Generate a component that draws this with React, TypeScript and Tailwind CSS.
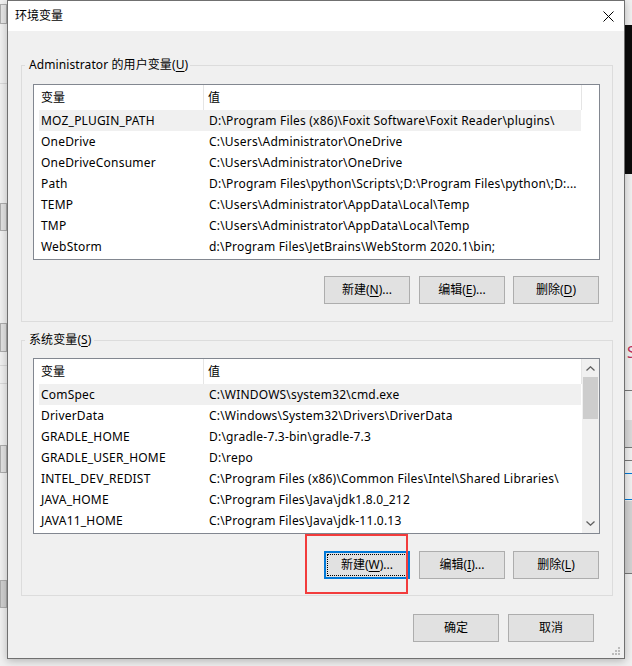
import React from "react";

type Row = [string, string];

const userVars: Row[] = [
  ["MOZ_PLUGIN_PATH", "D:\\Program Files (x86)\\Foxit Software\\Foxit Reader\\plugins\\"],
  ["OneDrive", "C:\\Users\\Administrator\\OneDrive"],
  ["OneDriveConsumer", "C:\\Users\\Administrator\\OneDrive"],
  ["Path", "D:\\Program Files\\python\\Scripts\\;D:\\Program Files\\python\\;D:..."],
  ["TEMP", "C:\\Users\\Administrator\\AppData\\Local\\Temp"],
  ["TMP", "C:\\Users\\Administrator\\AppData\\Local\\Temp"],
  ["WebStorm", "d:\\Program Files\\JetBrains\\WebStorm 2020.1\\bin;"],
];

const sysVars: Row[] = [
  ["ComSpec", "C:\\WINDOWS\\system32\\cmd.exe"],
  ["DriverData", "C:\\Windows\\System32\\Drivers\\DriverData"],
  ["GRADLE_HOME", "D:\\gradle-7.3-bin\\gradle-7.3"],
  ["GRADLE_USER_HOME", "D:\\repo"],
  ["INTEL_DEV_REDIST", "C:\\Program Files (x86)\\Common Files\\Intel\\Shared Libraries\\"],
  ["JAVA_HOME", "C:\\Program Files\\Java\\jdk1.8.0_212"],
  ["JAVA11_HOME", "C:\\Program Files\\Java\\jdk-11.0.13"],
];

function Mn({ pre, k, post }: { pre: string; k: string; post: string }) {
  return (
    <span className="whitespace-nowrap">
      {pre}
      <span className="underline underline-offset-2">{k}</span>
      {post}
    </span>
  );
}

function Btn({ children, focused, className = "" }: { children: React.ReactNode; focused?: boolean; className?: string }) {
  return (
    <div
      className={
        "relative w-[86px] h-[28px] flex items-center justify-center bg-[#e1e1e1] leading-[16px] " +
        (focused ? "border-2 border-[#0078d7] " : "border border-[#adadad] ") +
        className
      }
    >
      {focused && <span className="absolute inset-[1px] border border-dotted border-[#000]" />}
      {children}
    </div>
  );
}

function Chevron({ up }: { up?: boolean }) {
  return (
    <svg width="9" height="5" viewBox="0 0 9 5" className="block">
      <path
        d={up ? "M0.5 4.5 L4.5 0.8 L8.5 4.5" : "M0.5 0.5 L4.5 4.2 L8.5 0.5"}
        fill="none"
        stroke="#606060"
        strokeWidth="1.3"
      />
    </svg>
  );
}

function ListView({ rows, scroll }: { rows: Row[]; scroll?: boolean }) {
  return (
    <div className="w-[567px] h-[176px] border border-[#828790] bg-white flex overflow-hidden">
      <div className="w-[548px] flex flex-col">
        <div className="h-[25px] flex shrink-0">
          <div className="w-[170px] h-full flex items-center pl-[7px] border-r border-[#e5e5e5]">变量</div>
          <div className="w-[378px] h-full flex items-center pl-[4px] border-r border-[#e5e5e5]">值</div>
        </div>
        {rows.map((r, i) => (
          <div
            key={r[0]}
            className={
              "ml-[5px] w-[542px] h-[21px] flex items-center shrink-0 tracking-[0.2px] " +
              (i === 0 ? "bg-[#f0f0f0]" : "")
            }
          >
            <div className="w-[165px] pl-[2px] whitespace-nowrap overflow-hidden">{r[0]}</div>
            <div className="flex-1 pl-[5px] whitespace-nowrap overflow-hidden">{r[1]}</div>
          </div>
        ))}
      </div>
      {scroll ? (
        <div className="w-[17px] h-full bg-[#f0f0f0] flex flex-col">
          <div className="h-[17px] flex items-center justify-center pt-[1px]">
            <Chevron up />
          </div>
          <div className="flex-1 flex flex-col items-center">
            <div className="mt-[1px] w-[15px] h-[42px] bg-[#cdcdcd]" />
          </div>
          <div className="h-[17px] flex items-center justify-center pb-[2px]">
            <Chevron />
          </div>
        </div>
      ) : (
        <div className="w-[17px] h-full bg-white" />
      )}
    </div>
  );
}

function Group({
  legend,
  children,
  className = "",
}: {
  legend: React.ReactNode;
  children: React.ReactNode;
  className?: string;
}) {
  return (
    <div className={"relative border border-[#dcdcdc] " + className}>
      <div className="absolute left-[3px] top-[-9px] pl-[4px] pr-[2px] bg-[#f0f0f0] leading-[16px] tracking-[0.1px]">
        {legend}
      </div>
      {children}
    </div>
  );
}

export default function App() {
  return (
    <div className="relative w-[632px] h-[666px] overflow-hidden bg-[#f0f0f0] text-[12px] text-black font-['Noto_Sans','Noto_Sans_CJK_SC',sans-serif]">
      {/* desktop behind (left strip) */}
      <div className="absolute left-0 top-[4px] w-[7px] h-[20px] border border-[#adadad] bg-[#e6e6e6]" />
      <div className="absolute left-0 top-[83px] w-[7px] h-px bg-[#d9d9d9]" />
      <div className="absolute left-0 top-[203px] w-[7px] h-[28px] border border-[#adadad] bg-[#e1e1e1]" />
      <div className="absolute left-0 top-[323px] w-[7px] h-[29px] border border-[#adadad] bg-[#e1e1e1]" />
      <div className="absolute left-0 top-[365px] w-[7px] h-px bg-[#d9d9d9]" />
      <div className="absolute left-0 top-[383px] w-[7px] h-px bg-[#d9d9d9]" />
      <div className="absolute left-0 top-[445px] w-[7px] h-[28px] border border-[#adadad] bg-[#e1e1e1]" />
      <div className="absolute left-0 top-[580px] w-[7px] h-[28px] border border-[#adadad] bg-[#cfcfcf]" />
      {/* desktop behind (right strip) */}
      <div className="absolute left-[625px] top-[25px] w-[7px] h-[149px] bg-[#0c0c0c]" />
      <div className="absolute left-[625px] top-[343px] w-[7px] h-[18px] overflow-hidden">
        <div className="pl-[2px] text-[16px] leading-[18px] text-[#c0305a]">S</div>
      </div>
      <div className="absolute left-[625px] top-[390px] w-[7px] h-px bg-[#777]" />
      <div className="absolute left-[625px] top-[420px] w-[7px] h-[27px] bg-[#d9d9d9]" />
      <div className="absolute left-[625px] top-[447px] w-[7px] h-px bg-[#777]" />
      <div className="absolute left-[625px] top-[460px] w-[7px] h-px bg-[#777]" />
      <div className="absolute left-[625px] top-[473px] w-[7px] h-px bg-[#0078d7]" />
      <div className="absolute left-[625px] top-[499px] w-[7px] h-px bg-[#0078d7]" />
      <div className="absolute left-[625px] top-[501px] w-[7px] h-[72px] bg-[#d2d2d2]" />
      <div className="absolute left-[625px] top-[573px] w-[7px] h-px bg-[#777]" />

      {/* window */}
      <div className="absolute left-[7px] top-0 w-[618px] h-[659px] border border-[#707070] bg-[#f0f0f0] flex flex-col shadow-[0_2px_8px_rgba(0,0,0,0.25)]">
        {/* title bar */}
        <div className="h-[30px] bg-white flex items-center shrink-0">
          <span className="ml-[7px] text-[12px] leading-[16px]">环境变量</span>
          <div className="flex-1" />
          <svg width="11" height="11" viewBox="0 0 11 11" className="mr-[10px]">
            <path d="M0.5 0.5 L10.5 10.5 M10.5 0.5 L0.5 10.5" stroke="#000" strokeWidth="1" fill="none" />
          </svg>
        </div>

        {/* body */}
        <div className="flex flex-col pl-[13px] pr-[11px]">
          <Group
            className="mt-[34px] w-[592px] h-[257px] pt-[18px] pl-[11px]"
            legend={<Mn pre="Administrator 的用户变量(" k="U" post=")" />}
          >
            <ListView rows={userVars} />
            <div className="mt-[16px] w-[567px] flex justify-end pr-[1px]">
              <Btn>
                <Mn pre="新建(" k="N" post=")..." />
              </Btn>
              <Btn className="ml-[9px]">
                <Mn pre="编辑(" k="E" post=")..." />
              </Btn>
              <Btn className="ml-[8px]">
                <Mn pre="删除(" k="D" post=")" />
              </Btn>
            </div>
          </Group>

          <Group
            className="mt-[18px] w-[592px] h-[256px] pt-[17px] pl-[11px]"
            legend={<Mn pre="系统变量(" k="S" post=")" />}
          >
            <ListView rows={sysVars} scroll />
            <div className="mt-[17px] w-[567px] flex justify-end pr-[1px]">
              <Btn focused>
                <Mn pre="新建(" k="W" post=")..." />
              </Btn>
              <Btn className="ml-[9px]">
                <Mn pre="编辑(" k="I" post=")..." />
              </Btn>
              <Btn className="ml-[8px]">
                <Mn pre="删除(" k="L" post=")" />
              </Btn>
            </div>
            {/* red annotation rectangle */}
            <div className="absolute left-[283px] top-[193px] w-[103px] h-[60px] border-2 border-[#f23c3c] pointer-events-none" />
          </Group>

          <div className="mt-[18px] flex justify-end pr-[19px]">
            <Btn>确定</Btn>
            <Btn className="ml-[9px]">取消</Btn>
          </div>
        </div>

        {/* resize grip */}
        <svg width="10" height="10" viewBox="0 0 10 10" className="absolute right-[3px] bottom-[2px]">
          <rect x="7" y="1" width="2" height="2" fill="#bcbcbc" />
          <rect x="4" y="4" width="2" height="2" fill="#bcbcbc" />
          <rect x="7" y="4" width="2" height="2" fill="#bcbcbc" />
          <rect x="1" y="7" width="2" height="2" fill="#bcbcbc" />
          <rect x="4" y="7" width="2" height="2" fill="#bcbcbc" />
          <rect x="7" y="7" width="2" height="2" fill="#bcbcbc" />
        </svg>
      </div>
    </div>
  );
}
